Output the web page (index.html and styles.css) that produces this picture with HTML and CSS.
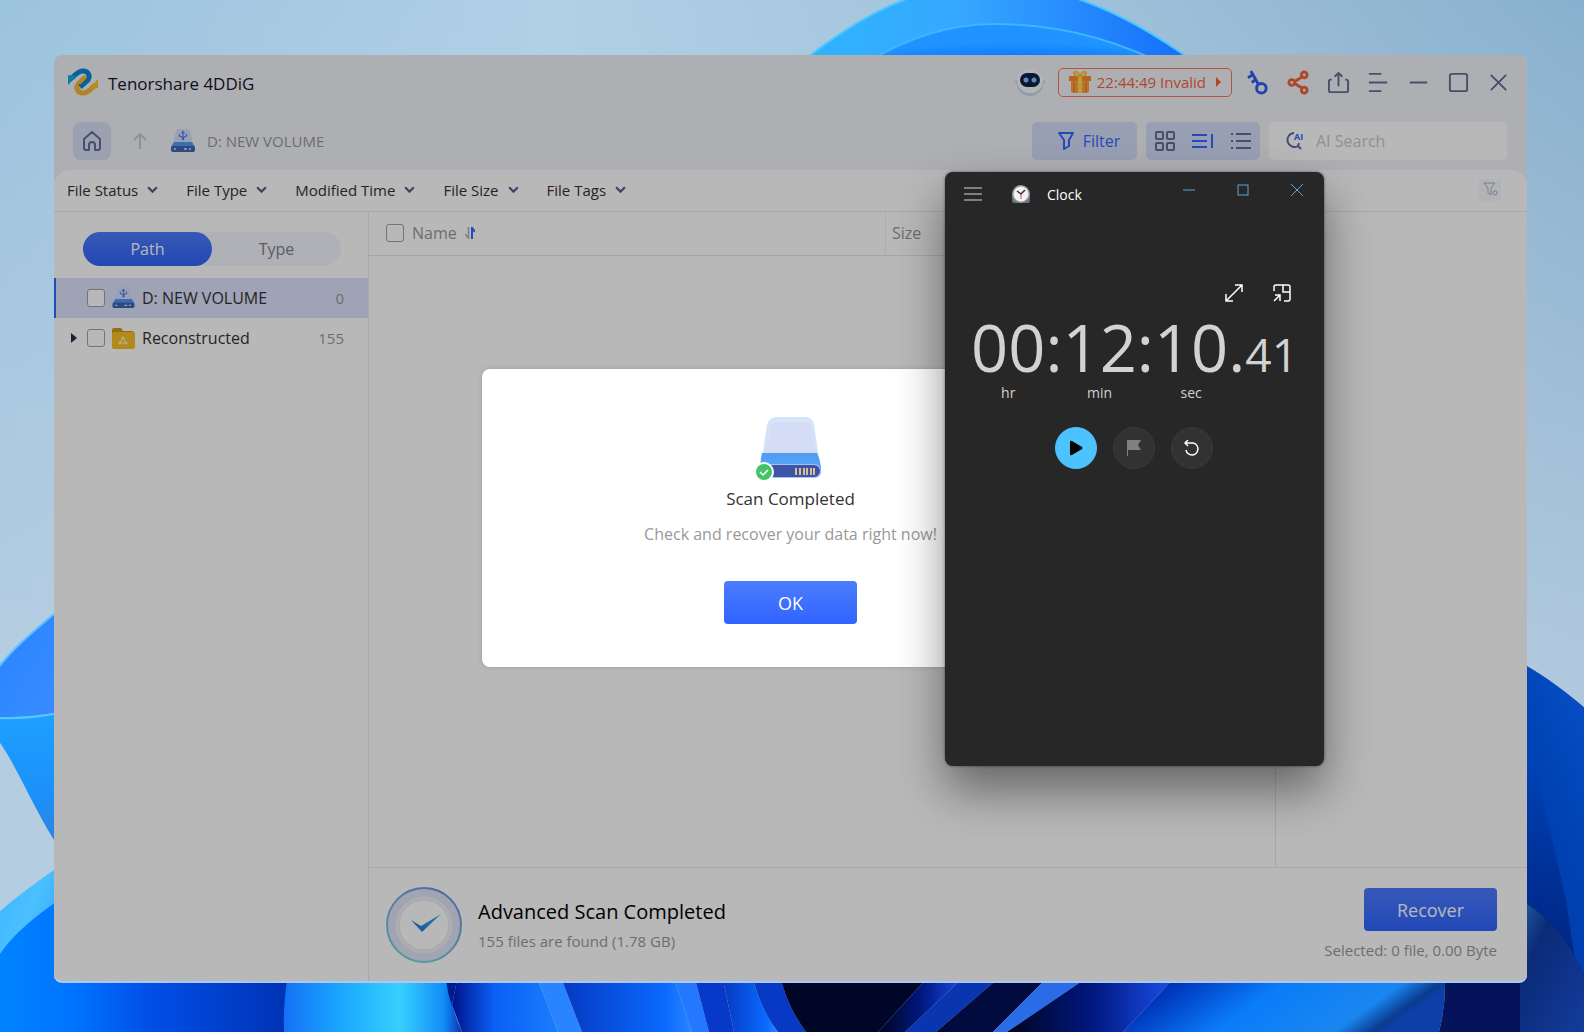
FILE: index.html
```html
<!DOCTYPE html>
<html lang="en">
<head>
    <meta charset="UTF-8">
    <meta name="viewport" content="width=device-width, initial-scale=1.0">
    <title>Tenorshare 4DDiG</title>
    <link rel="stylesheet" href="styles.css">
</head>
<body>

<!-- Desktop wallpaper -->
<svg class="wallpaper" viewBox="0 0 1584 1032" preserveAspectRatio="none" aria-hidden="true">
    <defs>
        <linearGradient id="sky" x1="0" y1="0" x2="1" y2="0">
            <stop offset="0" stop-color="#9cc3de"/><stop offset=".35" stop-color="#b0d0e6"/><stop offset=".7" stop-color="#9fc0d9"/><stop offset="1" stop-color="#88b0ce"/>
        </linearGradient>
        <linearGradient id="haze" x1="0" y1="0" x2="0" y2="1">
            <stop offset="0" stop-color="#bdd0e2" stop-opacity="0"/><stop offset=".65" stop-color="#bdd0e2" stop-opacity=".75"/>
        </linearGradient>
        <linearGradient id="arc" x1="0" y1="0" x2="1" y2="0">
            <stop offset="0" stop-color="#2fb4ff"/><stop offset=".4" stop-color="#36a8ff"/><stop offset="1" stop-color="#1268fa"/>
        </linearGradient>
        <radialGradient id="arcIn" cx=".5" cy="1" r=".6">
            <stop offset="0" stop-color="#0062ff"/><stop offset="1" stop-color="#1f93ff"/>
        </radialGradient>
        <linearGradient id="petalA" x1="0" y1="0" x2="1" y2="1">
            <stop offset="0" stop-color="#2684ff"/><stop offset="1" stop-color="#3b8cff"/>
        </linearGradient>
        <linearGradient id="petalB" x1="0" y1="0" x2="0" y2="1">
            <stop offset="0" stop-color="#1fa0ff"/><stop offset=".6" stop-color="#1b90fa"/><stop offset="1" stop-color="#3580d8"/>
        </linearGradient>
        <linearGradient id="band" x1="0" y1="0" x2="1" y2="1">
            <stop offset="0" stop-color="#3cb4ff"/><stop offset=".4" stop-color="#4cc0ff"/><stop offset="1" stop-color="#1c90ff"/>
        </linearGradient>
        <linearGradient id="deep" x1="0" y1="0" x2="1" y2="0">
            <stop offset="0" stop-color="#0084ff"/><stop offset=".25" stop-color="#0074ff"/><stop offset=".5" stop-color="#004fe6"/><stop offset="1" stop-color="#0030b0"/>
        </linearGradient>
        <linearGradient id="cyan" x1="0" y1="0" x2="1" y2="0">
            <stop offset="0" stop-color="#1570f5"/><stop offset=".3" stop-color="#18a4ff"/><stop offset=".65" stop-color="#38d0ff"/><stop offset=".9" stop-color="#108cf8"/><stop offset="1" stop-color="#0a30b0"/>
        </linearGradient>
        <linearGradient id="fold" x1="0" y1="0" x2="1" y2="0">
            <stop offset="0" stop-color="#00128a"/><stop offset=".4" stop-color="#0a60f5"/><stop offset="1" stop-color="#1a7cff"/>
        </linearGradient>
        <linearGradient id="foldB" x1="0" y1="0" x2="1" y2="0">
            <stop offset="0" stop-color="#0638c0"/><stop offset=".8" stop-color="#0a6aff"/><stop offset="1" stop-color="#2b86ff"/>
        </linearGradient>
        <linearGradient id="foldC" x1="0" y1="0" x2="1" y2="0">
            <stop offset="0" stop-color="#00041f"/><stop offset=".5" stop-color="#001880"/><stop offset="1" stop-color="#1c50ee"/>
        </linearGradient>
        <linearGradient id="wide" x1="0" y1="0" x2="1" y2=".25">
            <stop offset="0" stop-color="#001272"/><stop offset=".22" stop-color="#003bc0"/><stop offset=".5" stop-color="#0a7cf8"/><stop offset=".85" stop-color="#1a86f0"/><stop offset=".96" stop-color="#0a3c90"/><stop offset="1" stop-color="#0c3fa8"/>
        </linearGradient>
        <linearGradient id="right" x1="1" y1="0" x2=".6" y2="1">
            <stop offset="0" stop-color="#0a50c8"/><stop offset=".5" stop-color="#0042b4"/><stop offset="1" stop-color="#003aa8"/>
        </linearGradient>
        <linearGradient id="rightShade" x1="0" y1="0" x2="0" y2="1">
            <stop offset=".2" stop-color="#001c74" stop-opacity="0"/><stop offset="1" stop-color="#001c74"/>
        </linearGradient>
        <linearGradient id="navy" x1="0" y1="0" x2="1" y2="1">
            <stop offset="0" stop-color="#2560a0"/><stop offset=".3" stop-color="#0b2b78"/><stop offset="1" stop-color="#123c9c"/>
        </linearGradient>
    </defs>
    <rect width="1584" height="1032" fill="url(#sky)"/>
    <rect width="1584" height="1032" fill="url(#haze)"/>
    <path d="M790 72C870 4 930-16 990-16c70 0 140 28 220 90z" fill="url(#arc)" stroke="#4cc8ff" stroke-width="2"/>
    <path d="M860 66c50-30 90-42 135-42 60 0 120 14 180 46z" fill="url(#arcIn)" stroke="#40b4ff" stroke-width="2"/>
    <path d="M-2 668C14 647 34 631 60 609v104c-22 4-40 6-62 5z" fill="url(#petalA)" stroke="#58c4ff" stroke-width="2"/>
    <path d="M-2 718c22 1 40-1 62-5v136C38 818 16 764-2 740z" fill="url(#petalB)"/>
    <path d="M-2 718c22 1 40-1 62-5" fill="none" stroke="#58c8ff" stroke-width="2"/>
    <path d="M-2 913C14 899 36 882 60 866v166H-2z" fill="url(#band)"/>
    <path d="M-2 957c14-22 34-38 62-58v76h240v57H-2z" fill="url(#deep)"/>
    <path d="M288 975h158q4 30 16 57H284q-1-30 4-57z" fill="url(#cyan)"/>
    <path d="M446 975h12l-6 30q-5-12-6-30z" fill="#001a90"/>
    <path d="M458 975h78l22 57h-96l-10-27z" fill="url(#fold)"/>
    <path d="M536 975h24l22 57h-24z" fill="#2a84ff"/>
    <path d="M560 975h113l19 57H582z" fill="url(#foldB)"/>
    <path d="M673 975h21l15 57h-17z" fill="#2478ff"/>
    <path d="M694 975h28l12 57h-25z" fill="#0838c8"/>
    <path d="M722 975h30q8 34 26 57h-44z" fill="url(#foldB)"/>
    <path d="M752 975h28q6 30 26 57h-28q-18-23-26-57z" fill="#0839c4"/>
    <path d="M780 975h150l-52 57h-72q-20-27-26-57z" fill="#000628"/>
    <path d="M930 975h36l-61 57h-27z" fill="url(#foldC)"/>
    <path d="M966 975h36l-66 57h-31z" fill="#0a35b0"/>
    <path d="M1002 975h48l-57 57h-57z" fill="#020b40"/>
    <path d="M1050 975h41l-84 57h-14z" fill="#2a6ce8"/>
    <path d="M1091 975h86l-54 57h-116z" fill="url(#foldC)"/>
    <path d="M1177 975h268q1 30-6 57h-316z" fill="url(#wide)"/>
    <path d="M1520 662c26 15 44 28 66 47v323h-66z" fill="url(#right)"/>
    <path d="M1520 700l46 200 20 132h-66z" fill="url(#rightShade)"/>
    <path d="M1445 975h75V900c34 18 56 52 66 82v50h-147q7-27 6-57z" fill="#04135c"/>
    <path d="M1520 900c34 18 56 52 66 82v50h-66z" fill="url(#navy)"/>
</svg>

<!-- Shared drive icon -->
<svg class="sprite" aria-hidden="true">
    <symbol id="drive" viewBox="0 0 24 24">
        <path d="M5 2q.5-2 2.500-2h9q2 0 2.500 2l3 13H2z" fill="#d4def8"/>
        <path d="M12 10V3m-1.500 1.500L12 2.500l1.500 2M8.500 5v2L12 8.500 15.500 7V5" fill="none" stroke="#5b7ff0" stroke-width="1.200"/>
        <circle cx="12" cy="10" r="1.300" fill="#5b7ff0"/>
        <path d="M3 13h18l3 5H0z" fill="#4f9af5"/>
        <rect y="17" width="24" height="6" rx="2" fill="#3f66b8"/>
        <path d="M3 20h2m8 0h3m2 0h2" stroke="#dfe8ff" stroke-width="1.500"/>
    </symbol>
</svg>

<main class="desktop">
    <div class="app">
        <!-- Title bar -->
        <header class="titlebar">
            <svg class="logo" viewBox="0 0 30 28" fill="none">
                <path d="M28 17c-4 1-6 8-13 8-6 0-8-6-4-10l7-6" stroke="#f5b932" stroke-width="5"/>
                <path d="M30 11v9l-9 1z" fill="#f7c820"/>
                <path d="M2 11c4-1 6-8 13-8 6 0 8 6 4 10l-7 6" stroke="#0a84d8" stroke-width="5"/>
                <path d="M0 17V7l9 1z" fill="#12b0d8"/>
                <path d="M11 15l6-6" stroke="#f5b932" stroke-width="4"/>
            </svg>
            <h1>Tenorshare 4DDiG</h1>
            <div class="titlebar-actions">
                <button class="robot" aria-label="Assistant">
                    <svg width="32" height="30" viewBox="0 0 32 30">
                        <path d="M0 15l4-3v6zm32 0l-4-3v6z" fill="#d5d9e6"/>
                        <ellipse cx="16" cy="17" rx="13" ry="12" fill="#c9daf0"/>
                        <ellipse cx="16" cy="14" rx="13" ry="12" fill="#fafafa"/>
                        <rect x="6" y="6" width="20" height="14" rx="7" fill="#0d2247"/>
                        <circle cx="12" cy="13" r="2.500" fill="#7fc0ff"/><circle cx="20" cy="13" r="2.500" fill="#7fc0ff"/>
                    </svg>
                </button>
                <button class="offer">
                    <svg width="22" height="22" viewBox="0 0 22 22">
                        <path d="M2 9h18v11q0 2-2 2H4q-2 0-2-2z" fill="#ffa13d"/>
                        <path d="M0 5h22v5H0z" fill="#ff8a2a"/>
                        <path d="M9 5h4v17H9z" fill="#ffd65a"/>
                        <path d="M11 5C9 0 5 0 5 2s3 3 6 3c3 0 6-1 6-3s-4-2-6 3z" fill="none" stroke="#ffc23d" stroke-width="2"/>
                        <path d="M5 11v10M17 11v10" stroke="#f06a2a" stroke-width="1"/>
                    </svg>
                    <span>22:44:49 Invalid</span>
                    <svg width="5" height="10" viewBox="0 0 5 10"><path d="M0 0l5 5-5 5z" fill="#f06442"/></svg>
                </button>
                <div class="window-buttons">
                    <button class="key" aria-label="Register">
                        <svg viewBox="0 0 24 24"><circle cx="15" cy="18" r="5"/><path d="M12 14L4 0M6 4L1 7M9 9l-4 3"/></svg>
                    </button>
                    <button class="share" aria-label="Share">
                        <svg viewBox="0 0 24 24"><circle cx="5" cy="12" r="3"/><circle cx="18" cy="4" r="3"/><circle cx="18" cy="20" r="3"/><path d="M8 11l8-5M8 13l8 5"/></svg>
                    </button>
                    <button aria-label="Export">
                        <svg viewBox="0 0 24 24"><path d="M5 9H4q-2 0-2 2v9q0 2 2 2h16q2 0 2-2v-9q0-2-2-2h-1M12 16V2M8 6l4-4 4 4"/></svg>
                    </button>
                    <button aria-label="Menu">
                        <svg viewBox="0 0 24 24"><path d="M2 3h13M2 12h19M2 21h13"/></svg>
                    </button>
                    <button aria-label="Minimize">
                        <svg viewBox="0 0 24 24"><path d="M3 12h18"/></svg>
                    </button>
                    <button aria-label="Maximize">
                        <svg viewBox="0 0 24 24"><rect x="3" y="3" width="18" height="18" rx="2"/></svg>
                    </button>
                    <button aria-label="Close">
                        <svg viewBox="0 0 24 24"><path d="M4 4l16 16M20 4L4 20"/></svg>
                    </button>
                </div>
            </div>
        </header>

        <!-- Toolbar -->
        <div class="toolbar">
            <button class="home" aria-label="Home">
                <svg width="20" height="20" viewBox="0 0 20 20"><path d="M2 8l8-7 8 7v9q0 2-2 2h-3v-5q0-3-3-3t-3 3v5H4q-2 0-2-2z"/></svg>
            </button>
            <button class="up" aria-label="Up">
                <svg width="14" height="18" viewBox="0 0 14 18"><path d="M7 17V2M1 8l6-6 6 6"/></svg>
            </button>
            <svg class="drive-icon"><use href="#drive"/></svg>
            <span class="crumb">D: NEW VOLUME</span>
            <div class="toolbar-right">
                <button class="filter-btn">
                    <svg width="18" height="18" viewBox="0 0 18 18"><path d="M2 1h14l-4 7v6l-5 3V8z"/></svg>
                    Filter
                </button>
                <div class="views">
                    <button aria-label="Grid view">
                        <svg width="20" height="20" viewBox="0 0 20 20"><rect x="1" y="1" width="7" height="7" rx="1"/><rect x="12" y="1" width="7" height="7" rx="1"/><rect x="1" y="12" width="7" height="7" rx="1"/><rect x="12" y="12" width="7" height="7" rx="1"/></svg>
                    </button>
                    <button class="active" aria-label="Preview view">
                        <svg width="22" height="16" viewBox="0 0 22 16"><path d="M0 2h15M0 8h15M0 14h15M20 1v14"/></svg>
                    </button>
                    <button aria-label="List view">
                        <svg width="20" height="16" viewBox="0 0 20 16"><path d="M0 1h2M0 8h2M0 15h2M5 1h15M5 8h15M5 15h15"/></svg>
                    </button>
                </div>
                <label class="search">
                    <svg width="22" height="26" viewBox="0 0 22 26">
                        <path d="M10 5a7 7 0 1 0 4 13l3 3M15 15l-1 3" fill="none" stroke="#606f96" stroke-width="2"/>
                        <text x="10" y="12" class="ai-mark">AI</text>
                    </svg>
                    <input type="text" placeholder="AI Search" aria-label="AI Search">
                </label>
            </div>
        </div>

        <!-- Content panel -->
        <div class="panel">
            <div class="filters">
                <button>File Status <svg class="chevron" viewBox="0 0 10 7"><path d="M1 1l4 4 4-4"/></svg></button>
                <button>File Type <svg class="chevron" viewBox="0 0 10 7"><path d="M1 1l4 4 4-4"/></svg></button>
                <button>Modified Time <svg class="chevron" viewBox="0 0 10 7"><path d="M1 1l4 4 4-4"/></svg></button>
                <button>File Size <svg class="chevron" viewBox="0 0 10 7"><path d="M1 1l4 4 4-4"/></svg></button>
                <button>File Tags <svg class="chevron" viewBox="0 0 10 7"><path d="M1 1l4 4 4-4"/></svg></button>
                <button class="clear-filter" aria-label="Clear filters">
                    <svg width="15" height="15" viewBox="0 0 15 15"><path d="M1 1h11L8 6v7L5 11V6z"/><circle cx="12" cy="11" r="2"/></svg>
                </button>
            </div>

            <div class="columns">
                <aside class="sidebar">
                    <div class="tabs">
                        <button class="active">Path</button>
                        <button>Type</button>
                    </div>
                    <ul class="tree">
                        <li class="selected">
                            <span class="arrow"></span>
                            <input type="checkbox" id="vol">
                            <svg class="drive-icon"><use href="#drive"/></svg>
                            <label for="vol">D: NEW VOLUME</label>
                            <span class="count">0</span>
                        </li>
                        <li>
                            <span class="arrow"><svg width="6" height="10" viewBox="0 0 6 10"><path d="M0 0l6 5-6 5z" fill="#28304a"/></svg></span>
                            <input type="checkbox" id="rec">
                            <svg class="folder-icon" viewBox="0 0 23 22">
                                <path d="M0 3q0-2 2-2h7l2 3h9q2 0 2 2v6H0z" fill="#c79a18"/>
                                <rect x="0" y="5" width="23" height="17" rx="2" fill="#f7c028"/>
                                <path d="M11 10l3 6M11 11l-3 5h5" fill="none" stroke="#fff0b8" stroke-width="1"/>
                                <circle cx="11" cy="11" r="1.500" fill="#fff0b8"/><circle cx="8" cy="16" r="1.500" fill="#fff0b8"/><circle cx="14" cy="16" r="1.500" fill="#fff0b8"/>
                            </svg>
                            <label for="rec">Reconstructed</label>
                            <span class="count">155</span>
                        </li>
                    </ul>
                </aside>

                <section class="content">
                    <div class="files">
                        <table>
                            <thead>
                                <tr>
                                    <th class="col-name">
                                        <div class="th-inner">
                                            <input type="checkbox" aria-label="Select all">
                                            Name
                                            <svg width="10" height="12" viewBox="0 0 10 12"><path d="M3.500 0v11L0 7" fill="none" stroke="#a8adb8" stroke-width="1.500"/><path d="M7 12V1l3 4" fill="none" stroke="#36f" stroke-width="2"/></svg>
                                        </div>
                                    </th>
                                    <th>Size</th>
                                </tr>
                            </thead>
                        </table>
                        <div class="preview"></div>
                    </div>

                    <footer class="status">
                        <svg class="done" viewBox="0 0 76 76">
                            <defs>
                                <linearGradient id="ring" x1=".8" y1="0" x2=".3" y2="1"><stop offset="0" stop-color="#6f8fe8"/><stop offset=".5" stop-color="#7db0e6"/><stop offset="1" stop-color="#6fd6dc"/></linearGradient>
                                <linearGradient id="tick" x1="0" y1="1" x2="1" y2="0"><stop offset="0" stop-color="#2a6ee0"/><stop offset="1" stop-color="#30b8e0"/></linearGradient>
                            </defs>
                            <circle cx="38" cy="38" r="37" fill="#dfe3f6" stroke="url(#ring)" stroke-width="2"/>
                            <circle cx="38" cy="38" r="27" fill="#fff" stroke="#eef0f8" stroke-width="3"/>
                            <circle cx="38" cy="38" r="25" fill="#fff" stroke="#dfe9ec"/>
                            <path d="M25 33l10 6 20-12-19 18z" fill="url(#tick)"/>
                        </svg>
                        <div class="status-text">
                            <h2>Advanced Scan Completed</h2>
                            <p>155 files are found (1.78 GB)</p>
                        </div>
                        <div class="recover">
                            <button class="primary">Recover</button>
                            <p>Selected: 0 file, 0.00 Byte</p>
                        </div>
                    </footer>
                </section>
            </div>
        </div>

        <!-- Scan finished dialog -->
        <div class="overlay">
            <div class="dialog" role="dialog" aria-label="Scan Completed">
                <svg width="70" height="66" viewBox="0 0 70 66">
                    <defs>
                        <linearGradient id="disk" x1="0" y1="0" x2="0" y2="1"><stop offset="0" stop-color="#d9e4fa"/><stop offset="1" stop-color="#d3daf5"/></linearGradient>
                        <linearGradient id="diskEdge" x1="0" y1="0" x2="0" y2="1"><stop offset="0" stop-color="#4c9cf2"/><stop offset=".6" stop-color="#5aa6f5"/><stop offset="1" stop-color="#a0c0f8"/></linearGradient>
                    </defs>
                    <path d="M12 8q2-7 9-7h28q7 0 8 7l6 40H6z" fill="url(#disk)" stroke="#cfe4fa" stroke-width="2"/>
                    <path d="M15 10q1-5 7-5h26q6 0 7 5l4 27H11z" fill="#d5dcf5"/>
                    <path d="M6 36h55q3 6 4 14v4q0 7-7 7H6q-3-14 0-25z" fill="url(#diskEdge)"/>
                    <rect x="5" y="47" width="60" height="14" rx="7" fill="#a9c0f5"/>
                    <rect x="6" y="48" width="58" height="12" rx="6" fill="#3c55a8"/>
                    <path d="M40 51v7m4-7v7m4-7v7m3-7v7m4-7v7m3-7v7" stroke="#d8c090" stroke-width="2"/>
                    <circle cx="8" cy="55" r="10" fill="#fff"/>
                    <circle cx="8" cy="55" r="8" fill="#46c368"/>
                    <path d="M4 55l3 3 5-5" fill="none" stroke="#fff" stroke-width="1.500"/>
                </svg>
                <h2>Scan Completed</h2>
                <p>Check and recover your data right now!</p>
                <button class="primary">OK</button>
            </div>
        </div>
    </div>
</main>

<!-- Floating stopwatch window -->
<div class="clock">
    <div class="clock-bar">
        <button aria-label="Navigation">
            <svg width="18" height="14" viewBox="0 0 18 14"><path d="M0 1h18M0 7h18M0 13h18" stroke="#d8d8d8"/></svg>
        </button>
        <svg class="clock-icon" width="18" height="18" viewBox="0 0 18 18">
            <path d="M0 8h18v8q0 2-2 2H2q-2 0-2-2z" fill="#68727c"/>
            <circle cx="9" cy="9" r="9" fill="#8d969e"/>
            <circle cx="9" cy="9" r="7.500" fill="#f2f2f2"/>
            <path d="M5 6l4 3 4-4" fill="none" stroke="#333" stroke-width="1.500"/>
            <path d="M9 9v5" stroke="#e05040"/>
        </svg>
        <span class="clock-title">Clock</span>
        <div class="clock-controls">
            <button aria-label="Minimize"><svg width="12" height="12" viewBox="0 0 12 12"><path d="M0 6h12"/></svg></button>
            <button aria-label="Maximize"><svg width="12" height="12" viewBox="0 0 12 12"><rect x="1" y="1" width="10" height="10"/></svg></button>
            <button aria-label="Close"><svg width="12" height="12" viewBox="0 0 12 12"><path d="M0 0l12 12M12 0L0 12"/></svg></button>
        </div>
    </div>
    <div class="clock-modes">
        <button aria-label="Expand">
            <svg width="18" height="18" viewBox="0 0 18 18"><path d="M1 17L17 1M10 1h7v7M1 10v7h7"/></svg>
        </button>
        <button aria-label="Keep on top">
            <svg width="18" height="18" viewBox="0 0 18 18"><path d="M1 7V3q0-2 2-2h12q2 0 2 2v12q0 2-2 2h-4M10 1v7h7M1 17l6-6M2 11h5v6"/></svg>
        </button>
    </div>
    <div class="timer">
        <div class="unit"><span class="digits">00</span><span class="unit-name">hr</span></div>
        <span class="digits">:</span>
        <div class="unit"><span class="digits">12</span><span class="unit-name">min</span></div>
        <span class="digits">:</span>
        <div class="unit"><span class="digits">10</span><span class="unit-name">sec</span></div>
        <span class="digits">.<small>41</small></span>
    </div>
    <div class="clock-buttons">
        <button class="play" aria-label="Start"><svg width="14" height="16" viewBox="0 0 14 16"><path d="M1 2q0-2 2-1l10 6q1 1 0 2L3 15q-2 1-2-1z" fill="#000"/></svg></button>
        <button aria-label="Lap"><svg width="14" height="16" viewBox="0 0 14 16"><path d="M0 0h14l-3 5 3 5H1v6H0z" fill="#808080"/></svg></button>
        <button aria-label="Reset"><svg width="16" height="16" viewBox="0 0 16 16"><path d="M1 3h8a6 6 0 1 1-7 7M4 0L1 3l3 3" fill="none" stroke="#fff" stroke-width="1.500"/></svg></button>
    </div>
</div>

</body>
</html>
```

FILE: styles.css
```css
* {
    margin: 0;
    padding: 0;
    box-sizing: border-box;
}

body {
    font-family: 'Open Sans', 'Noto Sans', sans-serif;
    font-size: 15px;
    color: #333;
    overflow: hidden;
}

button {
    display: flex;
    align-items: center;
    justify-content: center;
    border: none;
    background: none;
    font: inherit;
    color: inherit;
    cursor: pointer;
}

h1, h2, th {
    font-weight: 400;
}

.wallpaper {
    position: absolute;
    inset: 0;
    width: 100%;
    height: 100%;
}

.sprite {
    position: absolute;
    width: 0;
    height: 0;
}

.desktop {
    display: flex;
    min-height: 100vh;
    padding: 55px 57px 49px 54px;
}

.app {
    position: relative;
    flex: 1;
    display: flex;
    flex-direction: column;
    background: #f2f3f7;
    border-radius: 8px;
    border-bottom: 2px solid #a9c8f4;
    overflow: hidden;
}

/* Title bar */
.titlebar {
    display: flex;
    align-items: center;
    height: 54px;
    padding: 0 9px 0 14px;
}

.logo {
    width: 30px;
    height: 28px;
    margin-right: 10px;
}

.titlebar h1 {
    padding-top: 3px;
    font-size: 17px;
    color: #15152e;
}

.titlebar-actions {
    display: flex;
    align-items: center;
    gap: 12px;
    margin-left: auto;
}

.offer {
    gap: 6px;
    height: 29px;
    padding: 0 10px;
    border: 1px solid #f5745a;
    border-radius: 5px;
    color: #f06442;
    font-size: 15px;
}

.offer span {
    margin-right: 4px;
}

.window-buttons {
    display: flex;
    margin-left: -6px;
}

.window-buttons button {
    width: 40px;
    height: 40px;
}

.window-buttons svg {
    width: 23px;
    height: 23px;
    fill: none;
    stroke: #606f96;
    stroke-width: 2;
    stroke-linejoin: round;
    overflow: visible;
}

.window-buttons .key svg {
    stroke: #2f5cf0;
    stroke-width: 3;
}

.window-buttons .share svg {
    stroke: #f06442;
    stroke-width: 3;
}

/* Toolbar */
.toolbar {
    display: flex;
    align-items: center;
    height: 61px;
    padding: 2px 20px 0 19px;
}

.home {
    width: 38px;
    height: 38px;
    border-radius: 8px;
    background: #d9e0f7;
}

.home svg, .up svg, .views svg, .filter-btn svg {
    fill: none;
    stroke: #606f96;
    stroke-width: 2;
    stroke-linejoin: round;
}

.up {
    margin: 0 24px 0 22px;
}

.up svg {
    stroke: #c3c8d4;
}

.drive-icon {
    width: 24px;
    height: 24px;
}

.crumb {
    margin-left: 12px;
    font-size: 15px;
    color: #98989c;
}

.toolbar-right {
    display: flex;
    gap: 9px;
    margin-left: auto;
}

.filter-btn {
    gap: 8px;
    width: 105px;
    height: 38px;
    padding-left: 8px;
    border-radius: 5px;
    background: #d5ddf8;
    color: #36f;
    font-size: 16px;
}

.filter-btn svg, .views .active svg {
    stroke: #36f;
}

.views {
    display: flex;
    height: 38px;
    border-radius: 5px;
    background: #d5ddf8;
}

.views button {
    width: 38px;
}

.search {
    display: flex;
    align-items: center;
    gap: 10px;
    width: 238px;
    height: 38px;
    padding-left: 15px;
    border-radius: 5px;
    background: #fff;
}

.search input {
    flex: 1;
    min-width: 0;
    border: none;
    outline: none;
    background: none;
    font: inherit;
    font-size: 16px;
}

.search input::placeholder {
    color: #c8c8cc;
}

.ai-mark {
    font-size: 9px;
    font-weight: 700;
    fill: #36f;
}

/* Content panel */
.panel {
    flex: 1;
    display: flex;
    flex-direction: column;
    border-radius: 16px 16px 0 0;
    background: #fff;
}

.filters {
    display: flex;
    align-items: center;
    gap: 28px;
    height: 42px;
    padding: 0 26px 2px 13px;
    border-bottom: 1px solid #e8eaf2;
    font-size: 15px;
}

.filters button {
    gap: 9px;
}

.chevron {
    width: 11px;
    height: 8px;
    fill: none;
    stroke: #566284;
    stroke-width: 2;
}

.filters .clear-filter {
    width: 22px;
    height: 22px;
    margin-left: auto;
    background: #f6f8fc;
}

.clear-filter svg {
    fill: none;
    stroke: #a8aebc;
}

.columns {
    flex: 1;
    display: flex;
}

.sidebar {
    width: 314px;
}

.tabs {
    display: flex;
    margin: 20px 27px 12px 29px;
    border-radius: 18px;
    background: #f3f6fc;
}

.tabs button {
    flex: 1;
    height: 34px;
    border-radius: 18px;
    font-size: 16px;
    color: #808288;
}

.tabs .active {
    background: linear-gradient(#4c7cff, #3064f8);
    color: #fff;
}

.tree {
    list-style: none;
    font-size: 16px;
}

.tree li {
    display: flex;
    align-items: center;
    height: 40px;
    padding-right: 24px;
    border-left: 2px solid transparent;
}

.tree .selected {
    border-color: #36f;
    background: #dce2fb;
}

.arrow {
    display: flex;
    justify-content: center;
    width: 31px;
    padding-left: 4px;
}

input[type="checkbox"] {
    appearance: none;
    width: 18px;
    height: 18px;
    border: 1px solid #98a1b4;
    border-radius: 3px;
    background: #fff;
}

.tree .drive-icon, .folder-icon {
    width: 23px;
    height: 22px;
    margin: 0 7px;
}

.count {
    margin-left: auto;
    font-size: 15px;
    color: #98989c;
}

.content {
    flex: 1;
    display: flex;
    flex-direction: column;
    border-left: 1px solid #e8eaf2;
}

.files {
    flex: 1;
    display: flex;
    align-items: flex-start;
}

table {
    flex: 1;
    border-collapse: collapse;
}

th {
    height: 43px;
    padding-left: 6px;
    border-bottom: 1px solid #e4e6ee;
    text-align: left;
    font-size: 16px;
    color: #98989c;
}

.col-name {
    width: 57%;
    padding-left: 17px;
    border-right: 1px solid #eef0f6;
}

.th-inner {
    display: flex;
    align-items: center;
    gap: 8px;
}

.preview {
    align-self: stretch;
    width: 252px;
    border-left: 1px solid #e4e6ee;
}

/* Status footer */
.status {
    display: flex;
    align-items: center;
    height: 114px;
    padding: 0 30px 0 17px;
    border-top: 1px solid #e8eaf2;
}

.done {
    width: 76px;
    height: 76px;
    margin-right: 16px;
}

.status-text {
    display: grid;
    gap: 4px;
}

.status-text h2 {
    font-size: 20px;
    line-height: 28px;
    color: #000;
}

.status p {
    font-size: 15px;
    line-height: 22px;
    color: #98989c;
}

.recover {
    display: grid;
    justify-items: end;
    gap: 8px;
    margin-left: auto;
}

.primary {
    width: 133px;
    height: 43px;
    border-radius: 4px;
    background: linear-gradient(#4c7cff, #3064ff);
    color: #fff;
    font-size: 18px;
}

/* Dialog */
.overlay {
    position: absolute;
    inset: 0;
    display: flex;
    align-items: center;
    justify-content: center;
    background: rgba(0, 0, 0, 0.28);
}

.dialog {
    display: flex;
    flex-direction: column;
    align-items: center;
    width: 618px;
    padding: 48px 0 43px;
    border-radius: 8px;
    background: #fff;
    box-shadow: 0 0 4px rgba(120, 130, 170, 0.5);
}

.dialog h2 {
    margin-top: 3px;
    font-size: 17px;
    line-height: 26px;
}

.dialog p {
    margin: 10px 0 35px;
    font-size: 16px;
    line-height: 24px;
    color: #999;
}

/* Stopwatch window */
.clock {
    position: absolute;
    top: 172px;
    left: 945px;
    width: 379px;
    height: 594px;
    border-radius: 8px;
    background: #272727;
    color: #fff;
    box-shadow: 0 0 3px rgba(0, 0, 0, 0.5), 0 24px 48px rgba(0, 0, 0, 0.45);
}

.clock-bar {
    display: flex;
    align-items: center;
    height: 44px;
    padding: 0 21px 0 19px;
}

.clock-icon {
    margin: 0 17px 0 30px;
}

.clock-title {
    font-size: 14px;
}

.clock-controls {
    display: flex;
    gap: 42px;
    margin-left: auto;
    padding-bottom: 8px;
}

.clock-controls svg {
    fill: none;
    stroke: #58a4dc;
}

.clock-modes {
    display: flex;
    justify-content: flex-end;
    gap: 30px;
    padding: 68px 33px 0 0;
}

.clock-modes svg {
    fill: none;
    stroke: #fff;
    stroke-width: 1.5;
}

.timer {
    display: flex;
    justify-content: center;
    margin-top: 13px;
    color: #d2d2d2;
}

.unit {
    display: flex;
    flex-direction: column;
    align-items: center;
}

.digits {
    font-size: 65px;
    line-height: 64px;
}

.digits small {
    font-size: 46px;
}

.unit-name {
    margin-top: 4px;
    font-size: 14px;
    line-height: 20px;
}

.clock-buttons {
    display: flex;
    justify-content: center;
    gap: 16px;
    margin: 24px 2px 0 0;
}

.clock-buttons button {
    width: 42px;
    height: 42px;
    border: 1px solid #3a3a3a;
    border-radius: 50%;
    background: #323232;
}

.clock-buttons .play {
    border-color: #4cc2ff;
    background: #4cc2ff;
}
```
